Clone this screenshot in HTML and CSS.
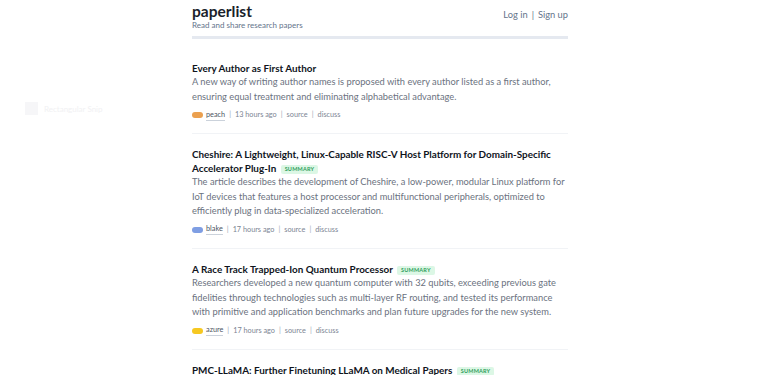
FILE: index.html
```html
<!DOCTYPE html>
<html lang="en">
<head>
  <meta charset="UTF-8" />
  <meta name="viewport" content="width=device-width, initial-scale=1.0"/>
  <title>paperlist</title>
  <link rel="stylesheet" href="styles.css">
</head>
<body>
  <div class="snip-ghost"><span class="snip-box"></span>Rectangular Snip</div>

  <div class="page">
    <header class="top">
      <div class="brand">
        <h1>paperlist</h1>
        <p>Read and share research papers</p>
      </div>
      <nav class="auth">
        <a href="#">Log in</a><span class="sep">|</span><a href="#">Sign up</a>
      </nav>
    </header>

    <main class="papers">
      <article class="paper">
        <h2>Every Author as First Author</h2>
        <p class="desc">A new way of writing author names is proposed with every author listed as a first author, ensuring equal treatment and eliminating alphabetical advantage.</p>
        <div class="meta">
          <span class="pill pill-peach"></span><a class="user" href="#">peach</a>
          <span class="sep">|</span><span>13 hours ago</span>
          <span class="sep">|</span><a href="#">source</a>
          <span class="sep">|</span><a href="#">discuss</a>
        </div>
      </article>

      <article class="paper">
        <h2>Cheshire: A Lightweight, Linux-Capable RISC-V Host Platform for Domain-Specific Accelerator Plug-In <span class="badge">Summary</span></h2>
        <p class="desc">The article describes the development of Cheshire, a low-power, modular Linux platform for IoT devices that features a host processor and multifunctional peripherals, optimized to efficiently plug in data-specialized acceleration.</p>
        <div class="meta">
          <span class="pill pill-blue"></span><a class="user" href="#">blake</a>
          <span class="sep">|</span><span>17 hours ago</span>
          <span class="sep">|</span><a href="#">source</a>
          <span class="sep">|</span><a href="#">discuss</a>
        </div>
      </article>

      <article class="paper">
        <h2>A Race Track Trapped-Ion Quantum Processor <span class="badge">Summary</span></h2>
        <p class="desc">Researchers developed a new quantum computer with 32 qubits, exceeding previous gate fidelities through technologies such as multi-layer RF routing, and tested its performance with primitive and application benchmarks and plan future upgrades for the new system.</p>
        <div class="meta">
          <span class="pill pill-yellow"></span><a class="user" href="#">azure</a>
          <span class="sep">|</span><span>17 hours ago</span>
          <span class="sep">|</span><a href="#">source</a>
          <span class="sep">|</span><a href="#">discuss</a>
        </div>
      </article>

      <article class="paper">
        <h2>PMC-LLaMA: Further Finetuning LLaMA on Medical Papers <span class="badge">Summary</span></h2>
      </article>
    </main>
  </div>
</body>
</html>
```

FILE: styles.css
```css
body {
  margin: 0;
  font-family: 'Lato', 'Open Sans', sans-serif;
  background: #fff;
  color: #111827;
}
a {
  color: inherit;
  text-decoration: none;
}
.page {
  width: 384px;
  margin: 0 auto;
  padding-right: 8px;
  box-sizing: border-box;
}
.top {
  display: flex;
  justify-content: space-between;
  align-items: flex-start;
  padding-top: 1px;
  padding-bottom: 6px;
  border-bottom: 3px solid #e5e9f0;
}
.brand h1 {
  margin: 0;
  font-size: 15.5px;
  line-height: 20px;
  font-weight: 700;
  color: #1a1f2b;
}
.brand p {
  margin: 0;
  font-size: 8px;
  line-height: 9px;
  color: #64748b;
}
.auth {
  font-size: 9.3px;
  line-height: 14px;
  color: #64748b;
  padding-top: 7px;
}
.auth .sep {
  margin: 0 4px;
}
.papers {
  padding-top: 22px;
}
.paper {
  padding-bottom: 12px;
  margin-bottom: 13px;
  border-bottom: 1px solid #f1f3f6;
}
.paper h2 {
  margin: 0;
  font-size: 9.9px;
  line-height: 14px;
  font-weight: 700;
  color: #0f141c;
}
.badge {
  display: inline-block;
  font-size: 5.5px;
  line-height: 9px;
  font-weight: 700;
  text-transform: uppercase;
  letter-spacing: 0.2px;
  color: #2f9e5b;
  background: #dcf7e5;
  padding: 0 4px;
  border-radius: 2px;
  vertical-align: 1px;
  margin-left: 2px;
}
.desc {
  margin: 0;
  font-size: 9.3px;
  line-height: 14.6px;
  color: #6b7280;
}
.meta {
  display: flex;
  align-items: center;
  margin-top: 5px;
  font-size: 7.3px;
  line-height: 12px;
  color: #7c8593;
}
.meta .sep {
  margin: 0 4px;
  color: #a0a8b4;
}
.meta .user {
  color: #4b5563;
  border-bottom: 1px solid #cbd2db;
  line-height: 10px;
}
.pill {
  display: inline-block;
  width: 11px;
  height: 6px;
  border-radius: 3px;
  margin-right: 3px;
}
.pill-peach {
  background: #eba04f;
}
.pill-blue {
  background: #7f9ee3;
}
.pill-yellow {
  background: #f6c821;
}
.snip-ghost {
  position: absolute;
  left: 25px;
  top: 102px;
  display: flex;
  align-items: center;
  gap: 6px;
  font-size: 8px;
  color: #f1f1f3;
}
.snip-box {
  width: 13px;
  height: 13px;
  background: #f6f6f8;
}
```
